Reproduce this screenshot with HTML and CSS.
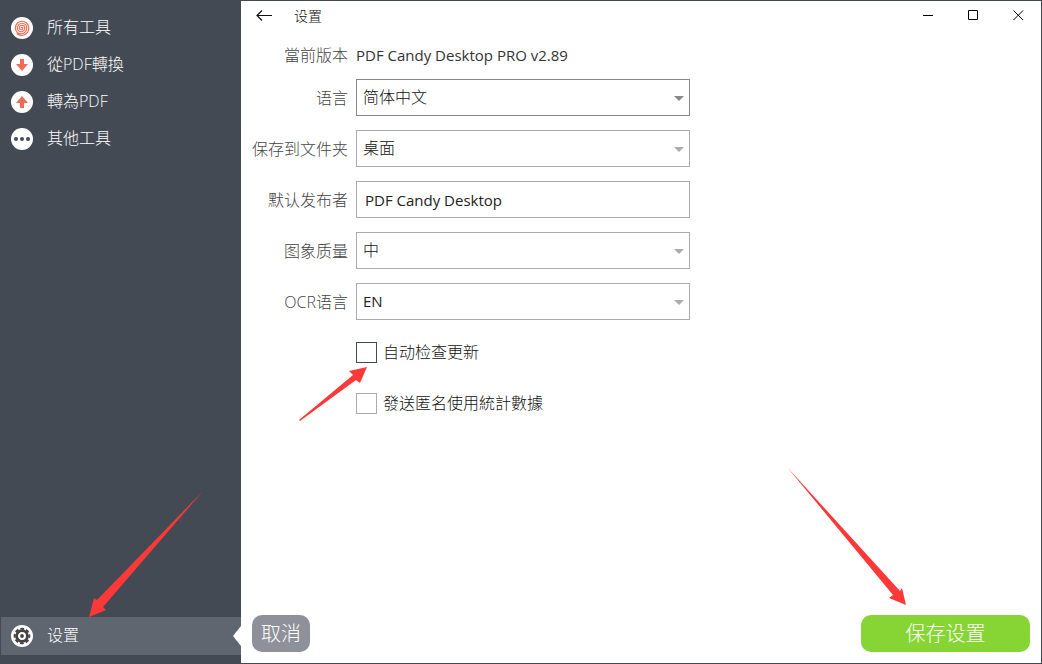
FILE: index.html
```html
<!DOCTYPE html>
<html lang="zh-CN">
<head>
    <meta charset="UTF-8">
    <meta name="viewport" content="width=device-width, initial-scale=1">
    <title>设置</title>
    <link rel="stylesheet" href="styles.css">
</head>
<body>
    <div class="window">
        <nav class="sidebar">
            <a class="nav-item" href="#all">
                <svg class="nav-icon" viewBox="0 0 22 22">
                    <circle cx="11" cy="11" r="11" fill="#fff"/>
                    <path d="M10.300 11a.75.75 0 0 1 1.500 0a1.750 1.750 0 0 1-3.500 0a2.750 2.750 0 0 1 5.500 0a3.750 3.750 0 0 1-7.500 0a4.750 4.750 0 0 1 9.500 0a5.750 5.750 0 0 1-11.500 0a6.750 6.750 0 0 1 13.500 0a7.200 7.200 0 0 1-12 5.500" fill="none" stroke="#ee6c56" stroke-width="1.200"/>
                </svg>
                <span>所有工具</span>
            </a>
            <a class="nav-item" href="#from-pdf">
                <svg class="nav-icon" viewBox="0 0 22 22">
                    <circle cx="11" cy="11" r="11" fill="#fff"/>
                    <path d="M9 5h4v5h4l-6 7-6-7h4z" fill="#ee6c56"/>
                </svg>
                <span>從PDF轉換</span>
            </a>
            <a class="nav-item" href="#to-pdf">
                <svg class="nav-icon" viewBox="0 0 22 22">
                    <circle cx="11" cy="11" r="11" fill="#fff"/>
                    <path d="M9 17h4v-5h4l-6-7-6 7h4z" fill="#ee6c56"/>
                </svg>
                <span>轉為PDF</span>
            </a>
            <a class="nav-item" href="#other">
                <svg class="nav-icon" viewBox="0 0 22 22">
                    <circle cx="11" cy="11" r="11" fill="#fff"/>
                    <g fill="#444a54">
                        <circle cx="5" cy="11" r="2"/>
                        <circle cx="11" cy="11" r="2"/>
                        <circle cx="17" cy="11" r="2"/>
                    </g>
                </svg>
                <span>其他工具</span>
            </a>
            <a class="nav-item nav-settings" href="#settings">
                <svg class="nav-icon" viewBox="0 0 22 22">
                    <circle cx="11" cy="11" r="11" fill="#fff"/>
                    <circle cx="11" cy="11" r="7.300" fill="none" stroke="#444" stroke-width="2" stroke-dasharray="3.600 2.133" stroke-dashoffset="1.800"/>
                    <circle cx="11" cy="11" r="5.400" fill="none" stroke="#444" stroke-width="2.800"/>
                    <circle cx="11" cy="11" r="1.900" fill="#444"/>
                </svg>
                <span>设置</span>
            </a>
        </nav>

        <main class="content">
            <header class="titlebar">
                <button class="title-btn" type="button" aria-label="返回">
                    <svg width="16" height="12" viewBox="0 0 16 12"><path d="M16 5.500H1M6 .5l-5 5 5 5" fill="none" stroke="#111" stroke-width="1.200"/></svg>
                </button>
                <h1 class="title">设置</h1>
                <div class="window-controls">
                    <button class="title-btn" type="button" aria-label="最小化">
                        <svg width="11" height="11" viewBox="0 0 11 11"><path d="M0 4.500h10" stroke="#000"/></svg>
                    </button>
                    <button class="title-btn" type="button" aria-label="最大化">
                        <svg width="11" height="11" viewBox="0 0 11 11"><path d="M.5 -.5h9v9h-9z" fill="none" stroke="#000"/></svg>
                    </button>
                    <button class="title-btn" type="button" aria-label="关闭">
                        <svg width="11" height="11" viewBox="0 0 11 11"><path d="M.5 -.5l9.500 9.500M10 -.5L.5 9" fill="none" stroke="#000"/></svg>
                    </button>
                </div>
            </header>

            <form class="settings" id="settingsForm">
                <span class="label">當前版本</span>
                <span class="version">PDF Candy Desktop PRO v2.89</span>

                <label class="label" for="language">语言</label>
                <div class="select-box active">
                    <select id="language"><option>简体中文</option></select>
                </div>

                <label class="label" for="folder">保存到文件夹</label>
                <div class="select-box">
                    <select id="folder"><option>桌面</option></select>
                </div>

                <label class="label" for="publisher">默认发布者</label>
                <input class="text-box" type="text" id="publisher" value="PDF Candy Desktop">

                <label class="label" for="quality">图象质量</label>
                <div class="select-box">
                    <select id="quality"><option>中</option></select>
                </div>

                <label class="label" for="ocr">OCR语言</label>
                <div class="select-box">
                    <select class="latin" id="ocr"><option>EN</option></select>
                </div>

                <div class="check-row">
                    <input class="check active" type="checkbox" id="updates">
                    <label for="updates">自动检查更新</label>
                    <svg class="pointer pointer-check" width="68" height="54" viewBox="0 0 68 54"><path d="M0 53L54 8 50 4 68 0 61 16 57 13 1 54z"/></svg>
                </div>
                <div class="check-row">
                    <input class="check" type="checkbox" id="stats">
                    <label for="stats">發送匿名使用統計數據</label>
                </div>
            </form>

            <footer class="actions">
                <button class="btn btn-cancel" type="button">取消</button>
                <button class="btn btn-save" type="submit" form="settingsForm">保存设置</button>
            </footer>
        </main>

        <svg class="pointer pointer-settings" width="114" height="126" viewBox="0 0 114 126"><path d="M114 0L8 109 5 107 0 126 17 119 14 116z"/></svg>
        <svg class="pointer pointer-save" width="120" height="139" viewBox="0 0 120 139"><path d="M0 0L113 124 115 121 119 138 102 131 106 128z"/></svg>
    </div>
</body>
</html>
```
FILE: styles.css
```css
* {
    box-sizing: border-box;
}
body {
    margin: 0;
    font-family: "Open Sans", "Noto Sans CJK SC", sans-serif;
    font-size: 16px;
    font-weight: 300;
    line-height: 20px;
    color: #111;
}
button, input, select {
    font: inherit;
    color: inherit;
    margin: 0;
}
.window {
    position: relative;
    display: flex;
    min-height: 100vh;
    border: 1px solid #444a54;
    background: #fff;
}

/* sidebar */
.sidebar {
    display: flex;
    flex-direction: column;
    flex: 0 0 240px;
    padding: 8px 0;
    background: #444a54;
}
.nav-item {
    display: flex;
    align-items: center;
    gap: 14px;
    height: 37px;
    padding-left: 10px;
    color: #fff;
    text-decoration: none;
}
.nav-item span {
    padding-bottom: 2px;
}
.nav-icon {
    width: 22px;
    height: 22px;
}
.nav-settings {
    height: 38px;
    margin-top: auto;
    background: #5f666f;
}
.nav-settings::after {
    content: "";
    margin-left: auto;
    border: solid transparent;
    border-width: 10px 8px 10px 0;
    border-right-color: #fff;
}

/* title bar */
.content {
    display: flex;
    flex-direction: column;
    flex: 1;
    min-width: 0;
}
.titlebar {
    display: flex;
    align-items: center;
    height: 30px;
}
.title-btn {
    display: flex;
    align-items: center;
    justify-content: center;
    width: 45px;
    height: 30px;
    padding: 0;
    border: 0;
    background: none;
}
.title-btn svg {
    overflow: visible;
}
.title {
    margin: 0;
    padding-left: 8px;
    font-size: 14px;
    font-weight: 300;
}
.window-controls {
    display: flex;
    margin-left: auto;
}

/* form */
.settings {
    display: grid;
    grid-template-columns: 96px minmax(0, 334px);
    gap: 14px 8px;
    align-items: center;
    padding: 14px 11px;
}
.label {
    color: #444;
    text-align: right;
    white-space: nowrap;
}
.version {
    font-size: 15px;
    font-weight: 400;
    color: #333;
}
.select-box {
    position: relative;
}
.select-box select,
.text-box {
    display: block;
    width: 100%;
    height: 37px;
    padding: 0 24px 2px 6px;
    border: 1px solid #acacac;
    border-radius: 0;
    background: #fff;
    appearance: none;
}
.text-box {
    padding: 0 8px;
    font-size: 15px;
    font-weight: 400;
    color: #222;
}
.select-box .latin {
    font-size: 15px;
    font-weight: 400;
    color: #222;
}
.select-box::after {
    content: "";
    position: absolute;
    top: 17px;
    right: 6px;
    border: solid transparent;
    border-width: 5px 5px 0;
    border-top-color: #acacac;
    pointer-events: none;
}
.select-box.active select {
    border-color: #888;
}
.select-box.active::after {
    border-top-color: #888;
}
.check-row {
    position: relative;
    grid-column: 2;
    display: flex;
    align-items: center;
    gap: 6px;
    height: 37px;
}
.check-row label {
    padding-bottom: 2px;
}
.check {
    width: 21px;
    height: 21px;
    border: 1px solid #acacac;
    background: #fff;
    appearance: none;
}
.check.active {
    border-color: #444a54;
}
.check:checked {
    background: #444a54;
}

/* buttons */
.actions {
    display: flex;
    justify-content: space-between;
    margin-top: auto;
    padding: 11px;
}
.btn {
    height: 37px;
    padding: 0;
    border: 0;
    border-radius: 10px;
    font-size: 20px;
    color: #fff;
}
.btn-cancel {
    width: 58px;
    background: #8e9199;
}
.btn-save {
    width: 169px;
    background: #87d534;
}

/* red arrows over the window */
.pointer {
    position: absolute;
    fill: #fd3838;
    pointer-events: none;
}
.pointer-check {
    top: 33px;
    left: -57px;
}
.pointer-settings {
    left: 88px;
    bottom: 46px;
}
.pointer-save {
    right: 134px;
    bottom: 57px;
}
```
